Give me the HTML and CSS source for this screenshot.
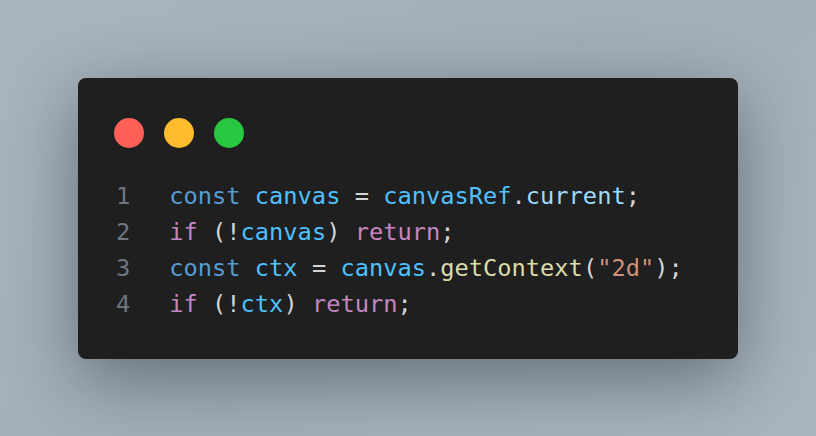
FILE: index.html
```html
<!DOCTYPE html>
<html lang="en">
<head>
<meta charset="utf-8">
<title>Code snippet</title>
<link rel="stylesheet" href="styles.css">
</head>
<body>
  <div class="card">
    <div class="dots">
      <span class="dot red"></span>
      <span class="dot yellow"></span>
      <span class="dot green"></span>
    </div>
    <div class="code">
      <div class="line"><span class="ln">1</span><span class="src"><span class="kw">const</span> <span class="cv">canvas</span> <span class="p">=</span> <span class="cv">canvasRef</span><span class="p">.</span><span class="v">current</span><span class="p">;</span></span></div>
      <div class="line"><span class="ln">2</span><span class="src"><span class="ctl">if</span> <span class="p">(!</span><span class="cv">canvas</span><span class="p">)</span> <span class="ctl">return</span><span class="p">;</span></span></div>
      <div class="line"><span class="ln">3</span><span class="src"><span class="kw">const</span> <span class="cv">ctx</span> <span class="p">=</span> <span class="cv">canvas</span><span class="p">.</span><span class="fn">getContext</span><span class="p">(</span><span class="str">"2d"</span><span class="p">);</span></span></div>
      <div class="line"><span class="ln">4</span><span class="src"><span class="ctl">if</span> <span class="p">(!</span><span class="cv">ctx</span><span class="p">)</span> <span class="ctl">return</span><span class="p">;</span></span></div>
    </div>
  </div>
</body>
</html>
```
FILE: styles.css
```css
html, body {
  margin: 0;
  height: 100%;
}
body {
  display: flex;
  align-items: center;
  justify-content: center;
  background: linear-gradient(135deg, #a9b4be 0%, #a3aeb8 50%, #a9b4be 100%);
}
.card {
  width: 660px;
  box-sizing: border-box;
  padding: 40px 36px 37px 36px;
  background: #1f1f1f;
  border-radius: 8px;
  box-shadow: 0 20px 70px rgba(20, 30, 40, 0.45);
}
.dots {
  display: flex;
  gap: 20px;
  margin-bottom: 30px;
}
.dot {
  width: 30px;
  height: 30px;
  border-radius: 50%;
}
.red { background: #fe5f57; }
.yellow { background: #febc2e; }
.green { background: #28c840; }
.code {
  font-family: "DejaVu Sans Mono", monospace;
  font-size: 23.7px;
  line-height: 36px;
}
.line {
  display: flex;
  gap: 39px;
}
.ln {
  color: #6e7681;
  width: 1ch;
  padding-left: 2px;
  text-align: right;
}
.src {
  color: #d4d4d4;
  white-space: pre;
}
.kw { color: #569cd6; }
.cv { color: #4fc1ff; }
.v { color: #9cdcfe; }
.ctl { color: #c586c0; }
.fn { color: #dcdcaa; }
.str { color: #ce9178; }
.p { color: #d4d4d4; }
```
